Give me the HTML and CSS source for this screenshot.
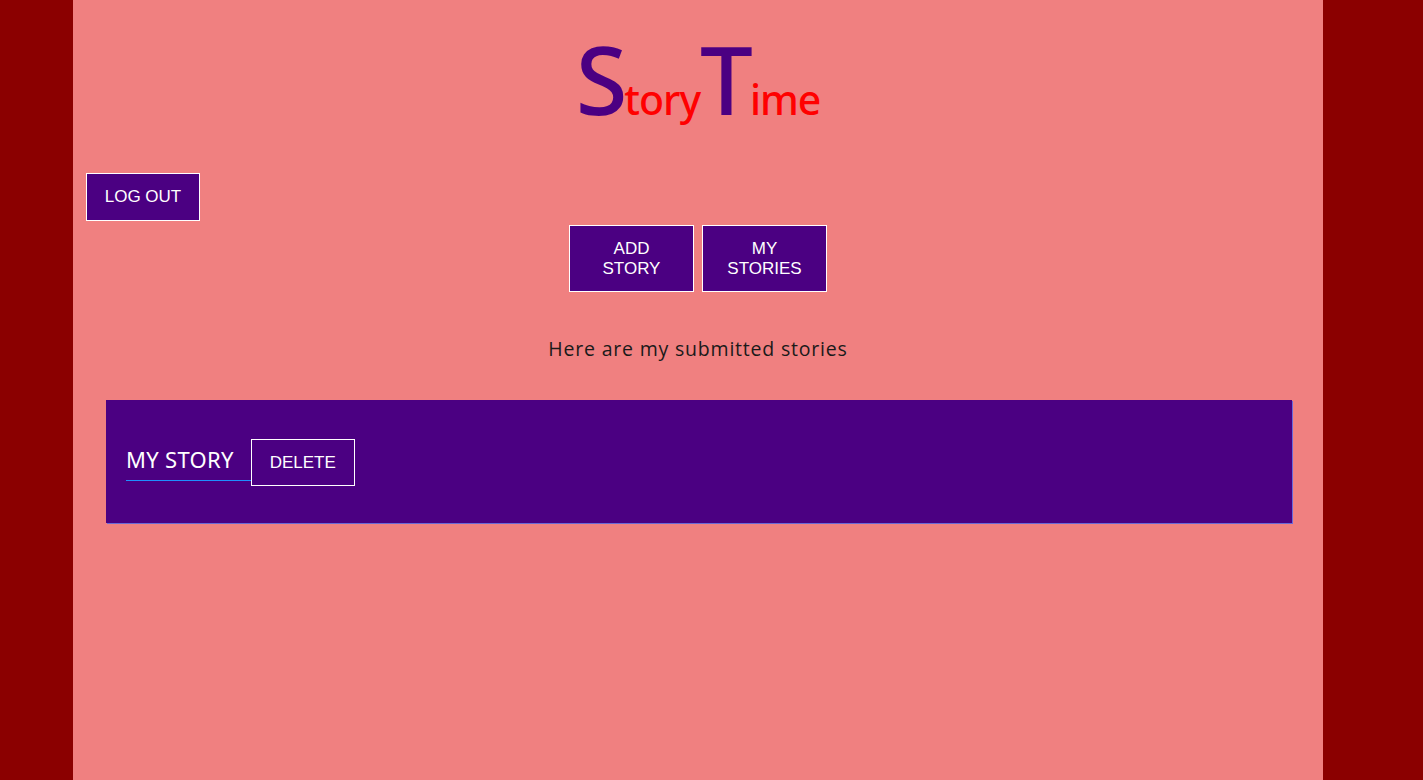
FILE: index.html
```html
<!DOCTYPE html>
<html>
<head>
<meta charset="utf-8">
<title>StoryTime</title>
<link rel="stylesheet" href="styles.css">
</head>
<body>
<div class="page">
  <h1 class="title"><span class="cap">S</span><span class="low">tory</span><span class="cap cap-t">T</span><span class="low">ime</span></h1>
  <div class="top-row">
    <button class="btn btn-logout">LOG OUT</button>
  </div>
  <nav class="nav">
    <button class="btn btn-nav">ADD<br>STORY</button>
    <button class="btn btn-nav">MY<br>STORIES</button>
  </nav>
  <p class="intro">Here are my submitted stories</p>
  <section class="card">
    <h2 class="story-title">MY STORY</h2>
    <button class="btn btn-delete">DELETE</button>
  </section>
</div>
</body>
</html>
```
FILE: styles.css
```css
html, body {
  margin: 0;
  padding: 0;
}
body {
  background: #8b0000;
  font-family: "Liberation Sans", Arial, sans-serif;
}
.page {
  width: 1250px;
  margin: 0 0 0 73px;
  min-height: 780px;
  background: #f08080;
  padding-top: 1px;
  box-sizing: border-box;
}
.title {
  margin: 28px 0 0;
  text-align: center;
  font-family: "Noto Sans", sans-serif;
  font-weight: 500;
  line-height: 100px;
  height: 100px;
}
.cap {
  color: #4b0082;
  font-size: 94px;
  letter-spacing: -3px;
}
.low {
  color: #ff0000;
  font-size: 41px;
  letter-spacing: -1px;
}
.top-row {
  margin-top: 44px;
  padding-left: 13px;
}
.btn {
  font-family: "Liberation Sans", Arial, sans-serif;
  color: #ffffff;
  background: #4b0082;
  border: 1px solid #ffffff;
  font-size: 17px;
  cursor: pointer;
}
.btn-logout {
  width: 114px;
  height: 48px;
}
.nav {
  margin-top: 4px;
  display: flex;
  justify-content: center;
  gap: 8px;
}
.btn-nav {
  width: 125px;
  height: 67px;
  line-height: 20px;
}
.intro {
  margin: 43px 0 0;
  text-align: center;
  font-family: "Open Sans", sans-serif;
  font-size: 19.5px;
  color: #1a1a1a;
  letter-spacing: 0.8px;
}
.card {
  margin: 38px 31px 0 33px;
  height: 123px;
  background: #4b0082;
  box-shadow: 1px 1px 0 #6a6ad8;
  display: flex;
  align-items: flex-start;
  padding-left: 20px;
  box-sizing: border-box;
}
.story-title {
  margin: 45px 0 0;
  font-family: "Noto Sans", sans-serif;
  font-weight: 400;
  font-size: 22px;
  line-height: 28px;
  color: #ffffff;
  padding: 0 17px 7px 0;
  border-bottom: 1px solid #1e90ff;
  letter-spacing: 0.3px;
}
.btn-delete {
  background: transparent;
  width: 104px;
  height: 47px;
  margin-top: 39px;
}
```
